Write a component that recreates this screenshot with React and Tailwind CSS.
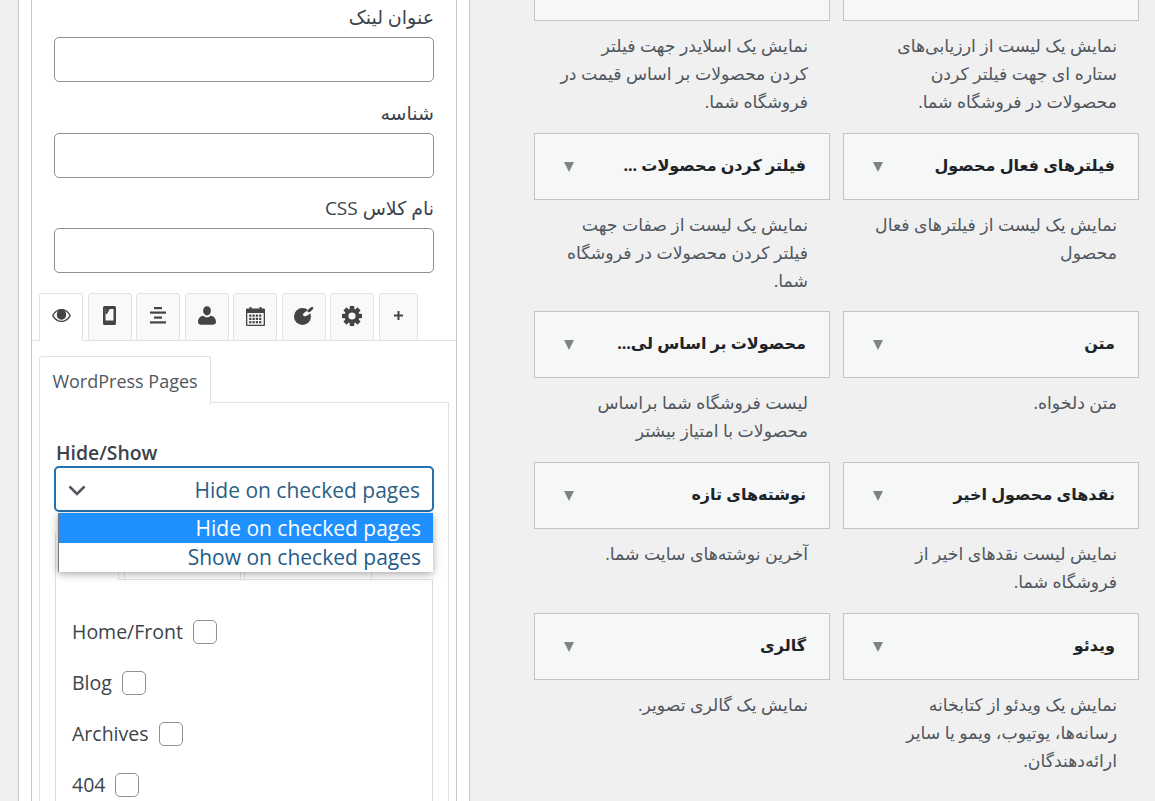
import React from "react";

const Ic = ({ children, w = 20, h = 20, vb = "0 0 20 20" }) => (
  <svg width={w} height={h} viewBox={vb} fill="#444">{children}</svg>
);

const icons = [
  <Ic w={21} h={15} vb="0 0 22 16" key="e">
    <path fillRule="evenodd" d="M11 1C6.500 1 2.800 3.800 1 8c1.800 4.200 5.500 7 10 7s8.200-2.800 10-7c-1.800-4.200-5.500-7-10-7zM2.600 8C4 5.300 6 3.700 7.600 3 6.600 4.200 6 5.500 6 7.500c0 2.800 2.200 5 5 5s5-2.200 5-5c0-2-.6-3.300-1.600-4.500C16 3.700 18 5.300 19.400 8 17.500 11.500 14.500 13.600 11 13.600S4.500 11.500 2.600 8z" />
    <path fillRule="evenodd" d="M11 3.500a4 4 0 1 0 0 8 4 4 0 0 0 0-8zM9.200 4.800a1.300 1.300 0 1 1 0 2.600 1.300 1.300 0 0 1 0-2.600z" />
  </Ic>,
  <Ic w={13} h={19} vb="0 0 13 19" key="m">
    <path fillRule="evenodd" d="M1.500 0h10A1.500 1.500 0 0 1 13 1.500v16a1.500 1.500 0 0 1-1.500 1.500h-10A1.500 1.500 0 0 1 0 17.500v-16A1.500 1.500 0 0 1 1.500 0zM2.500 3v11.500h8V3z" />
    <path d="M2.500 3h4.200L4 8H2.500z" />
  </Ic>,
  <Ic w={16} h={17} vb="0 0 16 17" key="a">
    <rect x="4" y="0" width="8" height="2.200" />
    <rect x="0" y="4.500" width="16" height="2.200" />
    <rect x="4" y="9.500" width="8" height="2.200" />
    <rect x="0" y="14.300" width="16" height="2.200" />
  </Ic>,
  <Ic w={18} h={19} vb="0 0 18 19" key="u">
    <ellipse cx="9" cy="4.800" rx="3.900" ry="4.600" />
    <path d="M0 16c0-4 2.500-6 5.500-6.300C6.500 10.700 7.700 11.200 9 11.200s2.500-.5 3.500-1.500c3 .3 5.500 2.300 5.500 6.300 0 1.800-1.500 2.800-3 2.800H3c-1.500 0-3-1-3-2.800z" />
  </Ic>,
  <Ic w={19} h={20} vb="0 0 19 20" key="c">
    <path fillRule="evenodd" d="M1 2.500h2.500V1h2v1.500h8V1h2v1.500H18a1 1 0 0 1 1 1V19a1 1 0 0 1-1 1H1a1 1 0 0 1-1-1V3.500a1 1 0 0 1 1-1zM1.300 7v11.700h16.400V7z" />
    {[0, 1, 2, 3].flatMap((c) =>
      [0, 1, 2].map((r) => (
        <rect key={`${c}-${r}`} x={3.200 + c * 3.300} y={8.500 + r * 3.300} width="2.200" height="2.200" />
      ))
    )}
  </Ic>,
  <Ic w={20} h={18} vb="0 0 20 18" key="p">
    <circle cx="8.500" cy="9.500" r="8.500" />
    <ellipse cx="13" cy="6.200" rx="4.500" ry="2.100" fill="#f9f9f9" transform="rotate(-32 13 6.200)" />
    <ellipse cx="16.400" cy="2.600" rx="3.500" ry="1.500" transform="rotate(-42 16.400 2.600)" />
  </Ic>,
  <Ic w={20} h={20} vb="0 0 20 20" key="g">
    <circle cx="10" cy="10" r="7.500" />
    {[0, 45, 90, 135, 180, 225, 270, 315].map((a) => (
      <rect key={a} x="7.800" y="0" width="4.400" height="4" transform={`rotate(${a} 10 10)`} />
    ))}
    <circle cx="10" cy="10" r="3.600" fill="#f9f9f9" />
  </Ic>,
  <Ic w={9} h={9} vb="0 0 9 9" key="pl">
    <path d="M3.500 0h2v3.500H9v2H5.500V9h-2V5.500H0v-2h3.500z" />
  </Ic>,
];

const Field = ({ label, cls = "" }) => (
  <div className={cls}>
    <div dir="rtl" className="h-[25px] w-[380px] text-[19px] leading-[25px] text-[#3c434a]">{label}</div>
    <div className="mt-[7px] h-[45px] w-[380px] rounded-[5px] border border-[#8c8f94] bg-white"></div>
  </div>
);

const Check = ({ label }) => (
  <div className="mb-[27px] flex h-[24px] items-center gap-[10px] text-[19.500px] leading-[24px] text-[#3c434a]">
    <span>{label}</span>
    <span className="h-[24px] w-[24px] rounded-[5px] border border-[#8c8f94] bg-white"></span>
  </div>
);

const Desc = ({ lines }) => (
  <div dir="rtl" className="mt-[11px] pr-[22px] text-[17.300px] leading-[28px] text-[#50575e]">
    {lines.map((l) => (
      <div key={l} className="whitespace-nowrap">{l}</div>
    ))}
  </div>
);

const Card = ({ title, lines = [] }) => (
  <div className="w-[296px]">
    <div className="flex h-[67px] items-center justify-between border border-[#c3c4c7] bg-[#f6f7f7] pl-[29px] pr-[23px]">
      <span className="mt-[1px] h-0 w-0 border-x-[5.500px] border-t-[10px] border-x-transparent border-t-[#7f8388]"></span>
      <span dir="rtl" className="mb-[4px] whitespace-nowrap text-[16px] font-bold leading-[24px] text-[#1d2327]">{title}</span>
    </div>
    <Desc lines={lines} />
  </div>
);

const TopCard = ({ lines }) => (
  <div className="w-[296px]">
    <div className="-mt-[46px] h-[67px] border border-[#c3c4c7] bg-[#f6f7f7]"></div>
    <Desc lines={lines} />
  </div>
);

const rows = [
  {
    cls: "mb-[17px]",
    a: { lines: ["نمایش یک لیست از ارزیابی‌های", "ستاره ای جهت فیلتر کردن", "محصولات در فروشگاه شما."] },
    b: { lines: ["نمایش یک اسلایدر جهت فیلتر", "کردن محصولات بر اساس قیمت در", "فروشگاه شما."] },
    top: true,
  },
  {
    cls: "mb-[16px]",
    a: { title: "فیلترهای فعال محصول", lines: ["نمایش یک لیست از فیلترهای فعال", "محصول"] },
    b: { title: "فیلتر کردن محصولات ...", lines: ["نمایش یک لیست از صفات جهت", "فیلتر کردن محصولات در فروشگاه", "شما."] },
  },
  {
    cls: "mb-[17px]",
    a: { title: "متن", lines: ["متن دلخواه."] },
    b: { title: "محصولات بر اساس لی...", lines: ["لیست فروشگاه شما براساس", "محصولات با امتیاز بیشتر"] },
  },
  {
    cls: "mb-[17px]",
    a: { title: "نقدهای محصول اخیر", lines: ["نمایش لیست نقدهای اخیر از", "فروشگاه شما."] },
    b: { title: "نوشته‌های تازه", lines: ["آخرین نوشته‌های سایت شما."] },
  },
  {
    cls: "",
    a: { title: "ویدئو", lines: ["نمایش یک ویدئو از کتابخانه", "رسانه‌ها، یوتیوب، ویمو یا سایر", "ارائه‌دهندگان."] },
    b: { title: "گالری", lines: ["نمایش یک گالری تصویر."] },
  },
];

export default function App() {
  return (
    <div className="flex h-[801px] w-[1155px] overflow-hidden bg-[#f0f0f1] font-['Open_Sans','DejaVu_Sans',sans-serif]">
      {/* left panel */}
      <div className="ml-[18px] h-full w-[452px] shrink-0 border-x border-[#c3c4c7] bg-white">
        <div className="ml-[12px] h-full w-[426px] border-x border-[#c3c4c7]">
          <div className="pl-[22px] pt-[5px]">
            <Field label="عنوان لینک" />
            <Field label="شناسه" cls="mt-[19px]" />
            <Field label="نام کلاس CSS" cls="mt-[18px]" />
          </div>

          {/* icon tabs */}
          <div className="mt-[20px] flex h-[48px] gap-[4.500px] border-b border-[#e2e2e2] pl-[7px]">
            {icons.map((ic, i) => (
              <div
                key={i}
                className={`flex h-[48px] items-center justify-center rounded-t-[3px] border border-[#e2e2e2] pb-[3px] ${
                  i === 0 ? "border-b-white bg-white" : "bg-[#f9f9f9]"
                } ${i === 7 ? "w-[39px]" : "w-[44px]"}`}
              >
                {ic}
              </div>
            ))}
          </div>

          {/* sub tabs */}
          <div className="ml-[7px] mt-[15px] w-[410px]">
            <div className="relative z-10 -mb-[3px] flex h-[49px] w-[172px] items-center justify-center rounded-t-[3px] border-x border-t border-[#e2e2e2] bg-white text-[18px] leading-[24px] text-[#50575e]">
              WordPress Pages
            </div>
            <div className="h-[500px] border-x border-t border-[#e2e2e2] pl-[14px] pt-[37px]">
              <div className="relative w-[380px]">
                <div className="h-[26px] pl-[2px] text-[19.400px] font-semibold leading-[26px] text-[#3c434a]">Hide/Show</div>
                <div className="flex h-[46px] w-[380px] items-center justify-between rounded-[5px] border-2 border-[#2271b1] bg-white pl-[12px] pr-[12px] pt-[2px] text-[21px] leading-[24px] text-[#2c5f85]">
                  <svg width="18" height="11" viewBox="0 0 18 11" fill="none" stroke="#50575e" strokeWidth="2.600">
                    <path d="M1.500 1.500 9 9l7.500-7.500" />
                  </svg>
                  <span>Hide on checked pages</span>
                </div>
                <div className="absolute left-[4px] top-[73px] z-20 w-[375px] border-l border-[#767676] bg-white text-right text-[21px] text-[#1f5c8a] shadow-[0_2px_8px_rgba(0,0,0,0.35)]">
                  <div className="h-[30px] bg-[#1e90ff] pr-[12px] leading-[30px] text-white">Hide on checked pages</div>
                  <div className="h-[29px] pr-[12px] leading-[28px]">Show on checked pages</div>
                </div>

                {/* inner tabs partly under the dropdown */}
                <div className="ml-px mt-[21px] flex h-[47px] w-[378px] border-b border-[#e2e2e2]">
                  <div className="relative h-[47px] w-[64px] border-x border-[#e2e2e2] bg-white"></div>
                  <div className="ml-[5px] h-[46px] w-[117px] border-x border-t border-[#e2e2e2]"></div>
                  <div className="ml-[3px] h-[46px] w-[128px] border-x border-t border-[#e2e2e2]"></div>
                </div>
                <div className="ml-px h-[300px] w-[378px] border-x border-[#dcdcde] pl-[16px] pt-[40px]">
                  <Check label="Home/Front" />
                  <Check label="Blog" />
                  <Check label="Archives" />
                  <Check label="404" />
                </div>
              </div>
            </div>
          </div>
        </div>
      </div>

      {/* right panel */}
      <div className="ml-[64px] flex flex-col">
        {rows.map((r, i) => (
          <div key={i} className={`flex gap-[13px] ${r.cls}`}>
            {r.top ? <TopCard lines={r.b.lines} /> : <Card {...r.b} />}
            {r.top ? <TopCard lines={r.a.lines} /> : <Card {...r.a} />}
          </div>
        ))}
      </div>
    </div>
  );
}
